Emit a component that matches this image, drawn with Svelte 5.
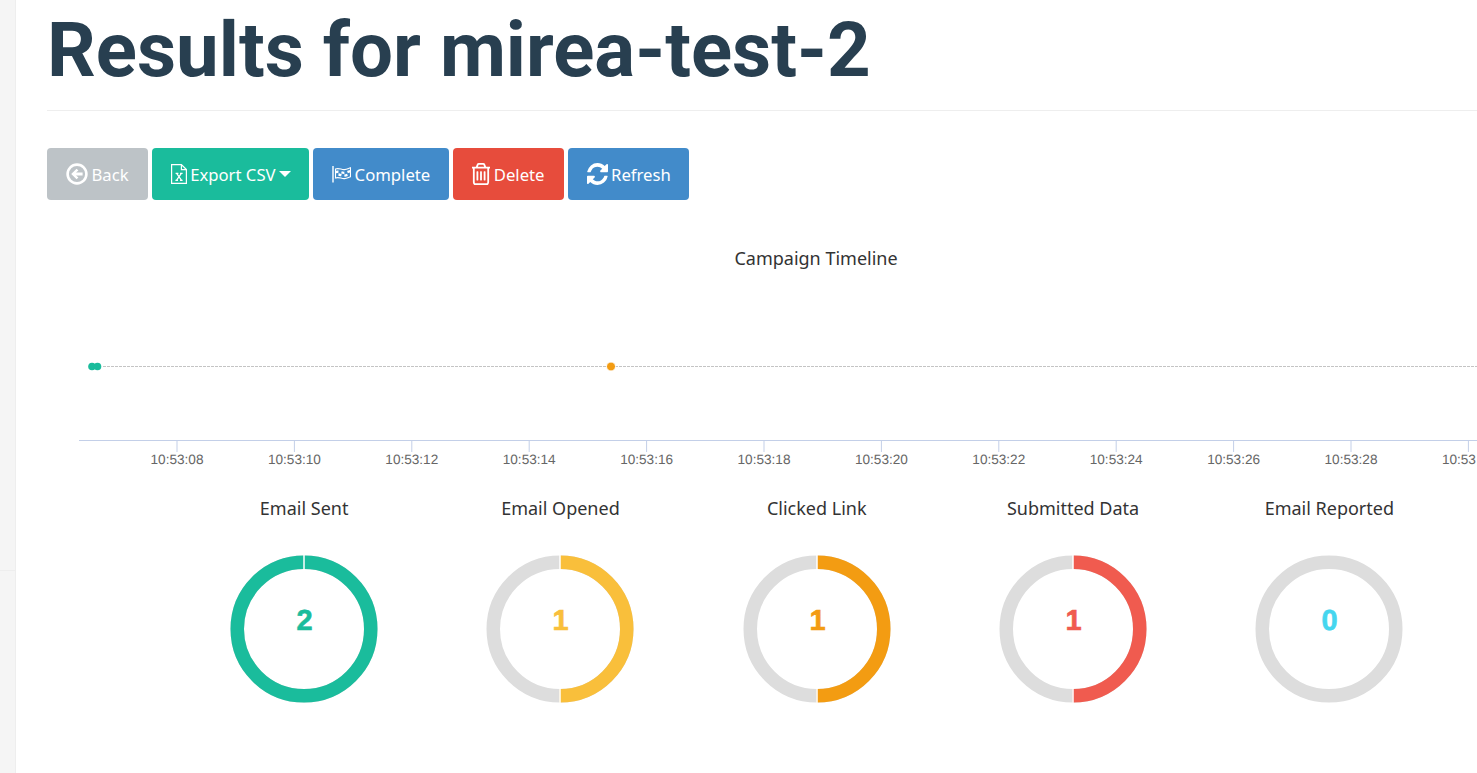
<script lang="ts">
	const buttons = [
		{ label: 'Back', color: 'grey', icon: 'back' },
		{ label: 'Export CSV', color: 'green', icon: 'excel', caret: true },
		{ label: 'Complete', color: 'blue', icon: 'flag' },
		{ label: 'Delete', color: 'red', icon: 'trash' },
		{ label: 'Refresh', color: 'blue', icon: 'refresh' }
	];

	const ticks = [
		'10:53:08', '10:53:10', '10:53:12', '10:53:14', '10:53:16', '10:53:18',
		'10:53:20', '10:53:22', '10:53:24', '10:53:26', '10:53:28'
	];
	const tickStep = 117.4;
	const tickStart = 130;
	// the last label is clipped by the chart edge in the real page
	const lastTick = tickStart + ticks.length * tickStep;

	const stats = [
		{ title: 'Email Sent', value: 2, share: 1, color: '#1abc9c' },
		{ title: 'Email Opened', value: 1, share: 0.5, color: '#f9bf3b' },
		{ title: 'Clicked Link', value: 1, share: 0.5, color: '#f39c12' },
		{ title: 'Submitted Data', value: 1, share: 0.5, color: '#f05b4f' },
		{ title: 'Email Reported', value: 0, share: 0, color: '#45d6ef' }
	];

	// donut segment from the top, clockwise; r is the centre of the stroke
	const r = 66.75;
	const circumference = 2 * Math.PI * r;
</script>

<div class="page">
	<aside class="sidebar">
		<div class="sidebar-top"></div>
		<div class="sidebar-bottom"></div>
	</aside>

	<main>
		<h1>Results for mirea-test-2</h1>

		<div class="actions">
			{#each buttons as b}
				<button class="btn {b.color}">
					{#if b.icon === 'back'}
						<svg class="icon" width="22" height="22" viewBox="0 0 22 22">
							<circle cx="11" cy="11" r="9.4" fill="none" stroke="currentColor" stroke-width="2.6" />
							<path d="M5.2 11 10.6 5.800 12.400 7.600 10 9.600H16.600V12.400H10L12.400 14.400 10.600 16.200Z" fill="currentColor" />
						</svg>
					{:else if b.icon === 'excel'}
						<svg class="icon" width="16" height="20" viewBox="0 0 16 20">
							<path d="M.6.6H10.400L15.400 5.600V19.400H.6Z M10.400.6V5.600H15.400" fill="none" stroke="currentColor" stroke-width="1.200" />
							<path d="M4.600 9.400H7.400M9 9.400H11.600M5.600 9.400 10.600 16.400M10.400 9.400 5.400 16.400M4.400 16.400H7M9 16.400H11.600" fill="none" stroke="currentColor" stroke-width="1.200" />
						</svg>
					{:else if b.icon === 'flag'}
						<svg class="icon" width="19" height="18" viewBox="0 0 19 18">
							<path d="M1 1V17.500" stroke="currentColor" stroke-width="1.400" fill="none" />
							<path d="M3.500 4C7 2.500 9.500 5 12.500 4.600 15 4.200 16.500 3.400 18.500 2.800V11.800C16.500 12.400 15 13.200 12.500 13.600 9.500 14 7 11.500 3.500 13Z" fill="none" stroke="currentColor" stroke-width="1.100" />
							<path d="M3.500 7.200C7 5.700 9.500 8.200 12.500 7.800 15 7.400 16.500 6.600 18.500 6" fill="none" stroke="currentColor" stroke-width="2.400" stroke-dasharray="3 3" />
							<path d="M3.500 10C7 8.500 9.500 11 12.500 10.600 15 10.200 16.500 9.400 18.500 8.800" fill="none" stroke="currentColor" stroke-width="2.400" stroke-dasharray="3 3" stroke-dashoffset="3" />
						</svg>
					{:else if b.icon === 'trash'}
						<svg class="icon" width="18" height="22" viewBox="256 128 1280 1536" preserveAspectRatio="none">
							<path fill="currentColor" d="M704 736v576q0 14-9 23t-23 9h-64q-14 0-23-9t-9-23v-576q0-14 9-23t23-9h64q14 0 23 9t9 23zm256 0v576q0 14-9 23t-23 9h-64q-14 0-23-9t-9-23v-576q0-14 9-23t23-9h64q14 0 23 9t9 23zm256 0v576q0 14-9 23t-23 9h-64q-14 0-23-9t-9-23v-576q0-14 9-23t23-9h64q14 0 23 9t9 23zm128 724v-948h-896v948q0 22 7 40.500t14.500 27 10.500 8.500h832q3 0 10.500-8.500t14.500-27 7-40.500zm-672-1076h448l-48-117q-7-9-17-11h-317q-10 2-17 11zm928 32v64q0 14-9 23t-23 9h-96v948q0 83-47 143.500t-113 60.500h-832q-66 0-113-58.500t-47-141.500v-952h-96q-14 0-23-9t-9-23v-64q0-14 9-23t23-9h309l70-167q15-37 54-63t79-26h320q40 0 79 26t54 63l70 167h309q14 0 23 9t9 23z" />
						</svg>
					{:else if b.icon === 'refresh'}
						<svg class="icon refresh" width="21" height="22" viewBox="128 128 1536 1536" preserveAspectRatio="none">
							<path fill="currentColor" d="M1639 1056q0 5-1 7-64 268-268 434.500t-478 166.500q-146 0-282.500-55t-243.500-157l-129 129q-19 19-45 19t-45-19-19-45v-448q0-26 19-45t45-19h448q26 0 45 19t19 45-19 45l-137 137q71 66 161 102t187 36q134 0 250-65t186-179q11-17 53-117 8-23 30-23h192q13 0 22.500 9.500t9.500 22.500zm25-800v448q0 26-19 45t-45 19h-448q-26 0-45-19t-19-45 19-45l138-138q-148-137-349-137-134 0-250 65t-186 179q-11 17-53 117-8 23-30 23h-199q-13 0-22.500-9.500t-9.500-22.500v-7q65-268 270-434.500t480-166.500q146 0 284 55.500t245 156.500l130-129q19-19 45-19t45 19 19 45z" />
						</svg>
					{/if}
					<span>{b.label}</span>
					{#if b.caret}<span class="caret"></span>{/if}
				</button>
			{/each}
		</div>

		<section class="timeline">
			<h2>Campaign Timeline</h2>
			<svg class="chart" width="1430" height="224" viewBox="0 0 1430 224">
				<line class="series" x1="56" x2="1430" y1="95.500" y2="95.500" />
				<circle cx="45" cy="95.500" r="3.800" fill="#1abc9c" />
				<circle cx="50.500" cy="95.500" r="3.800" fill="#1abc9c" />
				<circle cx="564" cy="95.500" r="4.500" fill="#f39c12" stroke="#fff" stroke-width="1" />
				<line class="axis" x1="32" x2="1430" y1="169.500" y2="169.500" />
				{#each ticks as t, i}
					<line class="axis" x1={tickStart + i * tickStep} x2={tickStart + i * tickStep} y1="170" y2="181" />
					<text class="tick" x={tickStart + i * tickStep} y="193" text-anchor="middle">{t}</text>
				{/each}
				<line class="axis" x1={lastTick} x2={lastTick} y1="170" y2="181" />
				<text class="tick" x={lastTick - 26.500} y="193">10:53</text>
			</svg>
		</section>

		<section class="stats">
			{#each stats as s}
				<div class="stat">
					<h3>{s.title}</h3>
					<div class="donut">
						<svg width="148" height="148" viewBox="0 0 148 148">
							<circle cx="74" cy="74" {r} fill="none" stroke="#dddddd" stroke-width="13.500" />
							{#if s.share > 0}
								<circle
									cx="74"
									cy="74"
									{r}
									fill="none"
									stroke={s.color}
									stroke-width="13.500"
									stroke-dasharray="{circumference * s.share} {circumference}"
									transform="rotate(-90 74 74)"
								/>
								<line x1="74" x2="74" y1="0" y2="14" stroke="#fff" stroke-width="1.500" />
							{/if}
							{#if s.share > 0 && s.share < 1}
								<line x1="74" x2="74" y1="134" y2="148" stroke="#fff" stroke-width="1.500" />
							{/if}
							<text class="count" x="74.500" y="67" text-anchor="middle" fill={s.color} stroke={s.color}>{s.value}</text>
						</svg>
					</div>
				</div>
			{/each}
		</section>
	</main>
</div>

<style>
	:global(body) {
		margin: 0;
		background: #fff;
	}
	.page {
		display: flex;
		height: 773px;
		overflow: hidden;
	}
	.sidebar {
		flex: 0 0 15px;
		background: #f5f5f5;
		border-right: 1px solid #eeeeee;
		display: flex;
		flex-direction: column;
	}
	.sidebar-top {
		height: 570px;
		border-bottom: 1px solid #eeeeee;
	}
	main {
		flex: 1;
		min-width: 0;
		padding-left: 31px;
		overflow: hidden;
	}
	h1 {
		margin: 0;
		height: 111px;
		box-sizing: border-box;
		border-bottom: 1px solid #eeeeee;
		font: 700 76.2px/100px Roboto, sans-serif;
		color: #283f50;
		white-space: nowrap;
	}
	.actions {
		display: flex;
		gap: 4px;
		margin-top: 37px;
	}
	.btn {
		display: flex;
		align-items: center;
		justify-content: center;
		gap: 3.5px;
		height: 52px;
		padding: 0 19px;
		border: none;
		border-radius: 4px;
		color: #fff;
		font: 400 16.700px "Noto Sans", sans-serif;
	}
	.icon {
		flex: none;
	}
	.refresh + span {
		margin-right: -1px;
	}
	.grey {
		background: #bdc3c7;
	}
	.green {
		background: #1abc9c;
	}
	.blue {
		background: #428bca;
	}
	.red {
		background: #e74c3c;
	}
	.caret {
		width: 0;
		height: 0;
		margin-right: -1px;
		border: 6px solid transparent;
		border-top-color: #fff;
		border-bottom: none;
	}
	.timeline h2 {
		margin: 45px 0 0;
		text-align: center;
		font: 400 18px/26px "Noto Sans", sans-serif;
		color: #333;
		width: 1538px;
	}
	.chart {
		display: block;
	}
	.series {
		stroke: #c4c4c4;
		stroke-dasharray: 3 1;
	}
	.axis {
		stroke: #c3cfe8;
	}
	.tick {
		font: 13.6px "Liberation Sans", sans-serif;
		fill: #666;
		text-rendering: geometricPrecision;
	}
	.stats {
		display: flex;
		margin-left: 129px;
	}
	.stat {
		flex: 0 0 256.300px;
		text-align: center;
	}
	.stat h3 {
		margin: 0;
		font: 400 18px/26px "Noto Sans", sans-serif;
		color: #333;
	}
	.donut {
		margin-top: 34px;
		height: 148px;
	}
	.count {
		font: 700 29px "Liberation Sans", sans-serif;
		dominant-baseline: middle;
		stroke-width: 0.6px;
		text-rendering: geometricPrecision;
	}
</style>
